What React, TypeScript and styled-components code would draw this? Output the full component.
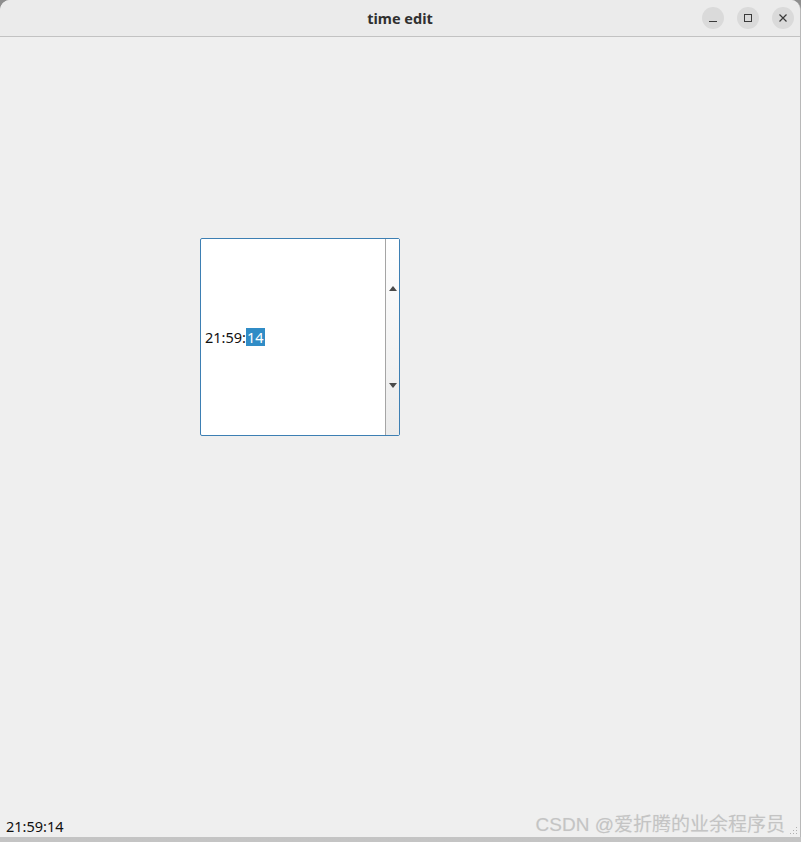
import React from "react";
import styled, { createGlobalStyle } from "styled-components";

const Global = createGlobalStyle`
  html, body { margin: 0; padding: 0; background: #6d6a7a; }
  body { width: 801px; height: 842px; overflow: hidden; font-family: "Noto Sans", "Open Sans", sans-serif; }
  #root { width: 801px; height: 842px; }
`;

const Screen = styled.div`
  width: 801px;
  height: 842px;
  display: flex;
  flex-direction: column;
  background: linear-gradient(#8e8e8e, #c4c4c4);
`;

const Window = styled.div`
  height: 837px;
  display: flex;
  flex-direction: column;
  background: #efefef;
  border-radius: 10px 10px 0 0;
  border-right: 1px solid #b8b8b8;
  box-sizing: border-box;
  overflow: hidden;
  position: relative;
`;

const TitleBar = styled.div`
  height: 37px;
  flex: 0 0 37px;
  background: #ebebeb;
  border-bottom: 1px solid #c2c2c2;
  display: flex;
  align-items: center;
  justify-content: flex-end;
  padding-right: 6px;
  box-sizing: border-box;
  gap: 13px;
  position: relative;
`;

const Title = styled.div`
  position: absolute;
  left: 0;
  right: 0;
  top: 0;
  height: 36px;
  line-height: 36px;
  text-align: center;
  font-size: 14.5px;
  font-weight: 700;
  color: #303030;
  pointer-events: none;
`;

const WinButton = styled.div`
  width: 22px;
  height: 22px;
  border-radius: 50%;
  background: #dadada;
  display: flex;
  align-items: center;
  justify-content: center;
`;

const Content = styled.div`
  flex: 1;
  padding: 201px 0 0 200px;
`;

const TimeEdit = styled.div`
  width: 200px;
  height: 198px;
  box-sizing: border-box;
  border: 1px solid #3d7fb3;
  border-radius: 2px;
  background: #ffffff;
  display: flex;
`;

const Field = styled.div`
  flex: 1;
  display: flex;
  align-items: center;
  padding-left: 4px;
  font-size: 14.5px;
  color: #101010;
`;

const Selected = styled.span`
  background: #308cc6;
  color: #ffffff;
  padding: 0 1px;
  line-height: 18px;
`;

const Spin = styled.div`
  width: 13px;
  border-left: 1px solid #a5a5a5;
  background: linear-gradient(#ffffff, #ebebeb);
  display: flex;
  flex-direction: column;
`;

const SpinHalf = styled.div<{ $up?: boolean }>`
  flex: 1;
  display: flex;
  justify-content: center;
  align-items: ${(p) => (p.$up ? "flex-end" : "flex-start")};
  padding: ${(p) => (p.$up ? "0 0 44px 0" : "48px 0 0 0")};
`;

const StatusBar = styled.div`
  height: 22px;
  flex: 0 0 22px;
  display: flex;
  align-items: center;
  padding-left: 6px;
  font-size: 14.5px;
  color: #101010;
  position: relative;
`;

const Watermark = styled.div`
  position: absolute;
  right: 15px;
  bottom: 1px;
  font-family: "Liberation Sans", "Noto Sans CJK SC", sans-serif;
  font-size: 19px;
  color: #c4c4c4;
  text-shadow: 0 0 1px #e0e0e0;
`;

const Grip = styled.svg`
  position: absolute;
  right: 2px;
  bottom: 2px;
`;

const Arrow = ({ up }: { up?: boolean }) => (
  <svg width="8" height="5" viewBox="0 0 8 5">
    <polygon points={up ? "0,5 8,5 4,0" : "0,0 8,0 4,5"} fill="#4a4a4a" />
  </svg>
);

export default function App() {
  return (
    <>
      <Global />
      <Screen>
        <Window>
          <TitleBar>
            <Title>time edit</Title>
            <WinButton>
              <svg width="10" height="10" viewBox="0 0 10 10">
                <line x1="1" y1="8.5" x2="9" y2="8.5" stroke="#3a3a3a" strokeWidth="1" />
              </svg>
            </WinButton>
            <WinButton>
              <svg width="10" height="10" viewBox="0 0 10 10">
                <rect x="1.5" y="1.5" width="7" height="7" fill="none" stroke="#3a3a3a" strokeWidth="1" />
              </svg>
            </WinButton>
            <WinButton>
              <svg width="10" height="10" viewBox="0 0 10 10">
                <path d="M1.5 1.5 L8.5 8.5 M8.5 1.5 L1.5 8.5" stroke="#3a3a3a" strokeWidth="1.2" />
              </svg>
            </WinButton>
          </TitleBar>
          <Content>
            <TimeEdit>
              <Field>
                21:59:<Selected>14</Selected>
              </Field>
              <Spin>
                <SpinHalf $up>
                  <Arrow up />
                </SpinHalf>
                <SpinHalf>
                  <Arrow />
                </SpinHalf>
              </Spin>
            </TimeEdit>
          </Content>
          <StatusBar>
            21:59:14
            <Watermark>CSDN @爱折腾的业余程序员</Watermark>
            <Grip width="10" height="10" viewBox="0 0 10 10">
              {[
                [8, 2], [8, 5], [8, 8], [5, 5], [5, 8], [2, 8],
              ].map(([x, y], i) => (
                <rect key={i} x={x} y={y} width="1" height="1" fill="#b0b0b0" />
              ))}
            </Grip>
          </StatusBar>
        </Window>
      </Screen>
    </>
  );
}
